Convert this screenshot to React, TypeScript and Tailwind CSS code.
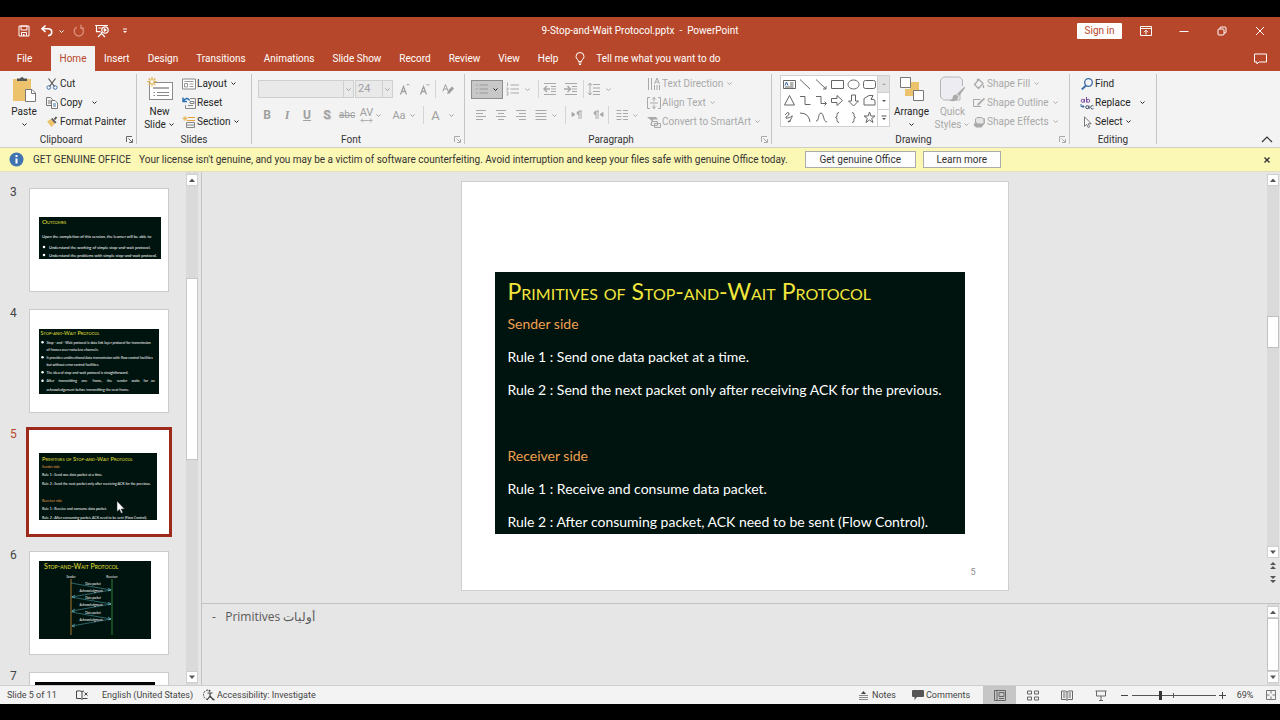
import type { ReactNode } from "react";
import clsx from "clsx";

type IconProps = {
  children: ReactNode;
  box?: string;
  className?: string;
};

function Icon({ children, box = "0 0 14 14", className = "size-[14px]" }: IconProps) {
  return (
    <svg
      viewBox={box}
      className={clsx("shrink-0", className)}
      fill="none"
      stroke="currentColor"
      strokeWidth="1"
      aria-hidden="true"
    >
      {children}
    </svg>
  );
}

function Chevron({ className = "" }: { className?: string }) {
  return (
    <Icon box="0 0 7 7" className={clsx("size-[7px]", className)}>
      <path d="M1.5 2.5 3.5 4.5 5.5 2.5" />
    </Icon>
  );
}

/* ---------- title bar and tabs ---------- */

const tabs = ["Insert", "Design", "Transitions", "Animations", "Slide Show", "Record", "Review", "View", "Help"];

function TitleBar() {
  return (
    <header className="grid h-[29px] grid-cols-[1fr_auto_1fr] items-center bg-[#b7472a] pb-px text-white">
      <div className="flex items-center pl-4">
        <button aria-label="Save" className="flex w-[15px] justify-center">
          <Icon box="0 0 12 12" className="size-3">
            <path d="M1 1h10v10H1z" />
            <path d="M3 1h6v4H3zM3.5 11V7.5h5V11" />
            <path d="M5 9h1.5v2H5z" fill="currentColor" stroke="none" />
          </Icon>
        </button>
        <button aria-label="Undo" className="ml-2 flex w-4 justify-center">
          <Icon className="size-[14px]">
            <path d="M5.5 1.5 2 4.8 5.5 8M2.3 4.8H8c5 0 5 6.5 0 7" strokeWidth="1.6" />
          </Icon>
        </button>
        <Chevron className="ml-[3px]" />
        <button aria-label="Redo" className="ml-[5px] flex w-[18px] justify-center text-[#d98a75]">
          <Icon className="size-[14px]">
            <path d="M9.2 3.4A4.6 4.6 0 1 1 4.8 3.2M9 .8v3.4h3.2" strokeWidth="1.5" />
          </Icon>
        </button>
        <button aria-label="Start from beginning" className="ml-[6px] flex w-4 justify-center">
          <Icon box="0 0 16 14" className="h-[14px] w-4">
            <path d="M1 1.5h13M2.5 1.5v6.2h4M4.5 4h3M4 13l3.5-3.5V8M7.5 9.5 11 13" strokeWidth="1.2" />
            <circle cx="11" cy="6" r="3.2" strokeWidth="1.2" />
            <path d="m10.2 4.5 2.2 1.5-2.2 1.5z" fill="currentColor" />
          </Icon>
        </button>
        <button aria-label="Customize quick access toolbar" className="ml-[10px] flex w-[10px] justify-center">
          <Icon box="0 0 6 6" className="size-[6px]">
            <path d="M1 1h4" />
            <path d="M1 3h4L3 5z" fill="currentColor" stroke="none" />
          </Icon>
        </button>
      </div>
      <h1 className="whitespace-pre">9-Stop-and-Wait Protocol.pptx  -  PowerPoint</h1>
      <div className="flex items-center justify-end pr-px">
        <button className="mr-[5px] h-4 w-[45px] rounded-[1px] bg-white text-[#b7472a]">Sign in</button>
        <button aria-label="Ribbon display options" className="flex w-[38px] justify-center">
          <Icon box="0 0 12 10" className="h-[10px] w-3">
            <path d="M.5 .5h11v9H.5zM.5 2.5h11M6 8.5v-4M4 6.2l2-2 2 2" />
          </Icon>
        </button>
        <button aria-label="Minimize" className="flex w-[38px] justify-center">
          <Icon box="0 0 10 10" className="size-[10px]">
            <path d="M.5 5.5h9" />
          </Icon>
        </button>
        <button aria-label="Restore" className="flex w-[38px] justify-center">
          <Icon box="0 0 10 10" className="size-[10px]">
            <rect x="1" y="3" width="6" height="6" rx="1" />
            <path d="M3 3V2q0-1 1-1h4q1 0 1 1v4q0 1-1 1H7" />
          </Icon>
        </button>
        <button aria-label="Close" className="flex w-[38px] justify-center">
          <Icon box="0 0 10 10" className="size-[10px]">
            <path d="m1 1 8 8M9 1 1 9" />
          </Icon>
        </button>
      </div>
    </header>
  );
}

function TabRow() {
  return (
    <nav className="flex h-[25px] items-stretch bg-[#b7472a] text-white">
      <button className="w-[49px]">File</button>
      <button className="ml-[2px] w-[44px] bg-[#f3f3f3] text-[#b7472a]">Home</button>
      <div className="flex items-stretch">
        {tabs.map((tab) => (
          <button key={tab} className="px-[9px] whitespace-nowrap">
            {tab}
          </button>
        ))}
      </div>
      <label htmlFor="tell-me" aria-label="Tell me" className="flex items-center pb-px pl-2">
        <Icon box="0 0 10 13" className="h-[13px] w-[10px]">
          <path d="M3.5 9.5C3.5 7.5 1 7 1 4.5a4 4 0 0 1 8 0C9 7 6.5 7.5 6.5 9.5zM3.5 11h3M4 12.5h2" />
        </Icon>
      </label>
      <input
        id="tell-me"
        placeholder="Tell me what you want to do"
        className="ml-[11px] w-40 bg-transparent outline-none placeholder:text-white"
      />
      <button aria-label="Comments" className="mr-[13px] ml-auto flex items-center">
        <Icon box="0 0 13 12" className="h-3 w-[13px]">
          <path d="M.5 1h12v8H5l-2 2V9H.5z" />
        </Icon>
      </button>
    </nav>
  );
}

/* ---------- ribbon ---------- */

type GroupProps = { label: string; width: string; launcher?: "on" | "off"; children: ReactNode };

function Group({ label, width, launcher, children }: GroupProps) {
  return (
    <section className={clsx("flex h-[76px] shrink-0", width)}>
      <div className="flex min-w-0 flex-1 flex-col">
        <div className="flex h-[61px] pt-[2px]">{children}</div>
        <div className="flex flex-1 items-center">
          <h2 className="flex-1 text-center text-[#333]">{label}</h2>
          {launcher && (
            <button
              aria-label={`${label} settings`}
              className={clsx("w-[14px] pl-1", launcher === "on" ? "text-[#666]" : "text-[#aaa]")}
            >
              <Icon box="0 0 7 7" className="size-[7px]">
                <path d="M.5 6V.5H6M2.5 2.5 6 6M6.5 3v3.5H3" />
              </Icon>
            </button>
          )}
        </div>
      </div>
      <div className="my-[3px] w-px bg-[#c6c6c6]" />
    </section>
  );
}

type CommandProps = { icon: ReactNode; label: string; menu?: "near" | "far"; disabled?: boolean };

function Command({ icon, label, menu, disabled }: CommandProps) {
  return (
    <button
      disabled={disabled}
      className={clsx("flex h-[19px] items-center whitespace-nowrap", disabled ? "text-[#a9a9a9]" : "text-[#262626]")}
    >
      <span className="mr-px flex w-[14px] justify-center">{icon}</span>
      {label}
      {menu && <Chevron className={menu === "far" ? "ml-2" : "ml-[3px]"} />}
    </button>
  );
}

function CommandColumn({ children, className }: { children: ReactNode; className?: string }) {
  return <div className={clsx("flex flex-col items-start pt-px", className)}>{children}</div>;
}

function BigCommand({ icon, lines, disabled }: { icon: ReactNode; lines: string[]; disabled?: boolean }) {
  return (
    <button
      disabled={disabled}
      className={clsx("flex flex-col items-center leading-[13px]", disabled ? "text-[#a9a9a9]" : "text-[#262626]")}
    >
      <span className="flex h-8 items-center">{icon}</span>
      <span>{lines[0]}</span>
      <span className="flex h-[13px] items-center gap-[2px]">
        {lines[1]}
        <Chevron />
      </span>
    </button>
  );
}

function Separator() {
  return <span className="h-[18px] w-px bg-[#d4d4d4]" />;
}

function ClipboardGroup() {
  return (
    <Group label="Clipboard" width="w-[137px]" launcher="on">
      <div className="flex w-[45px] justify-center pl-[3px]">
        <BigCommand
          lines={["Paste"]}
          icon={
            <Icon box="0 0 24 26" className="h-[26px] w-6">
              <path d="M1 3h18v22H1z" fill="#ecc26c" stroke="none" />
              <path d="M5 5V2.5h3Q10-.5 12 2.5h3V5z" fill="#555" stroke="none" />
              <path d="M13.5 13.5h6.5l3.5 3.5v8.5h-10z" fill="#fff" stroke="#777" />
              <path d="M19.5 13.5V17.5h4" stroke="#777" />
            </Icon>
          }
        />
      </div>
      <CommandColumn>
        <Command
          label="Cut"
          icon={
            <Icon box="0 0 12 12" className="size-3">
              <path d="M2.5 .5 8.5 8.5M9.5 .5 3.5 8.5" stroke="#555" strokeWidth="1.2" />
              <circle cx="2.8" cy="9.5" r="1.8" stroke="#4672a8" />
              <circle cx="9.2" cy="9.5" r="1.8" stroke="#4672a8" />
            </Icon>
          }
        />
        <Command
          label="Copy"
          menu="far"
          icon={
            <Icon box="0 0 12 12" className="size-3">
              <path d="M.5 .5h4l2 2v6h-6zM2 4h3M2 6h3" stroke="#777" />
              <path d="M5.5 3.5h3.5l2.5 2.5v5.5h-6z" fill="#fff" stroke="#777" />
              <path d="M7 7h3M7 9h3" stroke="#4672a8" />
            </Icon>
          }
        />
        <Command
          label="Format Painter"
          icon={
            <Icon box="0 0 12 12" className="size-3">
              <path d="M1 5.5 5 3l4 4.5L5.5 11z" fill="#ecc26c" stroke="none" />
              <path d="m5 3 1.5-1 4 4.5L9 7.5z" fill="#555" stroke="none" />
              <path d="m8.5 3.5 2-2.5" stroke="#555" strokeWidth="2" />
            </Icon>
          }
        />
      </CommandColumn>
    </Group>
  );
}

function SlidesGroup() {
  return (
    <Group label="Slides" width="w-[115px]">
      <div className="flex w-[45px] justify-center">
        <BigCommand
          lines={["New", "Slide"]}
          icon={
            <Icon box="0 0 26 24" className="h-6 w-[26px]">
              <rect x="2.5" y="5.5" width="23" height="17" fill="#fff" stroke="#8a8a8a" />
              <path d="M6 10h16v2H6z" fill="#aaa" stroke="none" />
              <path d="M10 15.5h12M10 18.5h12M6.5 15.5h1.5M6.5 18.5h1.5" stroke="#8a8a8a" />
              <path d="M5 0v9.5M.2 4.7h9.6M1.7 1.5l6.6 6.6M8.3 1.5 1.7 8.1" stroke="#e3b04b" strokeWidth="1.3" />
              <circle cx="5" cy="4.7" r="1.7" fill="#fff" stroke="none" />
            </Icon>
          }
        />
      </div>
      <CommandColumn>
        <Command
          label="Layout"
          menu="near"
          icon={
            <Icon box="0 0 14 12" className="h-3 w-[14px]">
              <path d="M.5 1h13v10H.5z" fill="#fff" stroke="#888" />
              <path d="M2.5 3.5h9M2.5 5.5h3v3.5h-3zM7.5 6h4M7.5 8.5h4" stroke="#999" />
            </Icon>
          }
        />
        <Command
          label="Reset"
          icon={
            <Icon box="0 0 14 12" className="h-3 w-[14px]">
              <path d="M8 1.5h5.5v10h-10V8M6 8.5h5M8 4.5h4v2H8z" stroke="#888" />
              <path d="M1 .5v4h4M1.2 4.3C3 .8 6.5.5 7.5 3.5" stroke="#2b6cb0" strokeWidth="1.4" />
            </Icon>
          }
        />
        <Command
          label="Section"
          menu="near"
          icon={
            <Icon box="0 0 14 12" className="h-3 w-[14px]">
              <path d="M3 0v5M.5 2.5h5M1.2.7l3.6 3.6M4.8.7 1.2 4.3" stroke="#e3b04b" strokeWidth=".8" />
              <path d="M6 1.5h7M5 4.5h8" stroke="#e3a13c" />
              <path d="M4.5 6.5h8v5h-8zM4.5 9h8" stroke="#888" />
            </Icon>
          }
        />
      </CommandColumn>
    </Group>
  );
}

function FontGroup() {
  return (
    <Group label="Font" width="w-[213px]" launcher="off">
      <div className="flex flex-col gap-2 pt-[7px] pl-[6px] text-[#a0a0a0]">
        <div className="flex h-[18px] items-center">
          <div className="flex h-[18px] w-[96px] items-center border border-[#cfcfcf] bg-[#e9e9e9]">
            <select aria-label="Font name" disabled className="h-full min-w-0 flex-1 appearance-none border-r border-[#cfcfcf]" />
            <Chevron className="mx-px" />
          </div>
          <div className="ml-px flex h-[18px] w-[38px] items-center border border-[#cfcfcf] bg-[#e9e9e9]">
            <select
              aria-label="Font size"
              disabled
              className="h-full min-w-0 flex-1 appearance-none border-r border-[#cfcfcf] pl-[2px] text-[11px]"
            >
              <option>24</option>
            </select>
            <Chevron className="mx-px" />
          </div>
          <button disabled aria-label="Increase font size" className="ml-[2px] flex w-5 justify-center">
            <Icon box="0 0 12 12" className="size-3">
              <path d="m1.5 11.5 3-8 3 8M2.5 8.5h4" strokeWidth="1.3" />
              <path d="m7.5 2.5 1.5-1.5 1.5 1.5" />
            </Icon>
          </button>
          <button disabled aria-label="Decrease font size" className="flex w-5 justify-center">
            <Icon box="0 0 12 12" className="size-3">
              <path d="m1.5 11.5 3-8 3 8M2.5 8.5h4" strokeWidth="1.3" />
              <path d="m7.5 1 1.5 1.5 1.5-1.5" />
            </Icon>
          </button>
          <Separator />
          <button disabled aria-label="Clear all formatting" className="flex w-6 justify-center">
            <Icon box="0 0 12 12" className="size-3">
              <path d="m.8 8.5 2.7-7 2.7 7M1.8 6h3.4" />
              <path d="m6.5 7 3.5-3.5 2 2L7.5 10.5 5 11z" fill="currentColor" stroke="none" />
            </Icon>
          </button>
        </div>
        <div className="-ml-px flex h-[18px] items-center text-xs leading-none">
          <button disabled className="w-5 font-bold">B</button>
          <button disabled className="w-5 font-serif font-bold italic">I</button>
          <button disabled className="w-5 font-bold underline">U</button>
          <button disabled className="w-5 font-bold [text-shadow:1px_1px_1px_#ccc]">S</button>
          <button disabled className="w-5 text-[10px] line-through">abc</button>
          <button disabled aria-label="Character spacing" className="flex w-7 items-center justify-center gap-[2px]">
            <span className="flex flex-col items-center text-[11px]">
              AV
              <Icon box="0 0 13 5" className="h-[5px] w-[13px]">
                <path d="M1 2.5h11M3 .5l-2 2 2 2M10 .5l2 2-2 2" strokeWidth=".8" />
              </Icon>
            </span>
            <Chevron />
          </button>
          <button disabled className="flex w-[38px] items-center justify-center gap-[3px] text-[11px]">
            Aa
            <Chevron />
          </button>
          <Separator />
          <button disabled aria-label="Font color" className="flex w-[38px] items-center justify-center gap-2 text-[13px]">
            A
            <Chevron />
          </button>
        </div>
      </div>
    </Group>
  );
}

function Lines({ d, label }: { d: string; label: string }) {
  return (
    <button disabled aria-label={label} className="flex w-5 justify-center">
      <Icon box="0 0 12 10" className="h-[10px] w-3">
        <path d={d} />
      </Icon>
    </button>
  );
}

function ParagraphGroup() {
  return (
    <Group label="Paragraph" width="w-[307px]" launcher="off">
      <div className="flex w-[182px] flex-col gap-2 pt-[7px] pl-[6px] text-[#a9a9a9]">
        <div className="flex h-[18px] items-center">
          <button
            aria-label="Bullets"
            className="flex h-[19px] w-8 items-center justify-center gap-[3px] border border-[#8e8e8e] bg-[#c8c8c8]"
          >
            <Icon className="size-[14px]">
              <path d="M1 3h1.5M1 7h1.5M1 11h1.5M4.5 3H13M4.5 7H13M4.5 11H13" stroke="#999" />
            </Icon>
            <Chevron className="text-[#222]" />
          </button>
          <button disabled aria-label="Numbering" className="flex w-7 items-center justify-end gap-1">
            <Icon className="size-[14px]">
              <path d="M4.5 3H13M4.5 7H13M4.5 11H13M1.5.5V4M.5 6h1.5v2H.5M.5 10h1.5v3H.5" />
            </Icon>
            <Chevron />
          </button>
          <span className="w-[7px]" />
          <Separator />
          <button disabled aria-label="Decrease list level" className="ml-[2px] flex w-[18px] justify-center">
            <Icon className="size-[14px]">
              <path d="M1 1.5h12M8 4.5h5M8 7h5M8 9.5h5M1 12.5h12" />
              <path d="M1 7h6M4 4 1 7l3 3" strokeWidth="1.5" />
            </Icon>
          </button>
          <button disabled aria-label="Increase list level" className="flex w-[24px] justify-center">
            <Icon className="size-[14px]">
              <path d="M1 1.5h12M8 4.5h5M8 7h5M8 9.5h5M1 12.5h12" />
              <path d="M0 7h6M3.5 4l3 3-3 3" strokeWidth="1.5" />
            </Icon>
          </button>
          <Separator />
          <button disabled aria-label="Line spacing" className="flex w-[28px] items-center justify-end gap-1">
            <Icon className="size-[14px]">
              <path d="M6 2.5h7M6 6h7M6 9.5h7M6 12.5h7M3 1v12M1 3.5 3 1l2 2.5M1 10.5 3 13l2-2.5" />
            </Icon>
            <Chevron />
          </button>
        </div>
        <div className="flex h-[18px] items-center">
          <Lines label="Align left" d="M1 .5h10M1 3.5h7M1 6.5h10M1 9.5h7" />
          <Lines label="Center" d="M1 .5h10M3 3.5h6M1 6.5h10M3 9.5h6" />
          <Lines label="Align right" d="M1 .5h10M4 3.5h7M1 6.5h10M4 9.5h7" />
          <Lines label="Justify" d="M.5 .5h11M.5 3.5h11M.5 6.5h11M.5 9.5h11" />
          <Chevron />
          <span className="w-[7px]" />
          <Separator />
          <Icon box="0 0 12 10" className="mx-[5px] h-[10px] w-3">
            <path d="M1 2.5v4l3-2zM8 1v8M10 1v8M11 1H8" fill="currentColor" />
            <path d="M8 1Q5.5 1 5.5 3T8 5z" fill="currentColor" stroke="none" />
          </Icon>
          <Icon box="0 0 12 10" className="mx-1 h-[10px] w-3">
            <path d="M11 2.5v4l-3-2zM4 1v8M6 1v8M7 1H4" fill="currentColor" />
            <path d="M4 1Q1.5 1 1.5 3T4 5z" fill="currentColor" stroke="none" />
          </Icon>
          <Separator />
          <button disabled aria-label="Columns" className="flex w-[30px] items-center justify-end gap-1">
            <Icon box="0 0 12 10" className="h-[10px] w-3">
              <path d="M.5 .5h5M.5 3.5h5M.5 6.5h5M.5 9.5h5M7 .5h5M7 3.5h5M7 6.5h5M7 9.5h5" />
            </Icon>
            <Chevron />
          </button>
        </div>
      </div>
      <CommandColumn>
        <Command
          disabled
          label="Text Direction"
          menu="near"
          icon={
            <Icon box="0 0 14 12" className="h-3 w-[14px]">
              <path d="M1.5 0v12M4.5 0v12M10 7v5M12.5 7v5M7.5 7v5M7.5 6l2.5-6 2.5 6M8.5 4h3" />
            </Icon>
          }
        />
        <Command
          disabled
          label="Align Text"
          menu="near"
          icon={
            <Icon box="0 0 14 12" className="h-3 w-[14px]">
              <path d="M3 .5H.5v11H3M11 .5h2.5v11H11M3 6h8M7 0v4.5M5 2.5 7 .5l2 2M7 7.5V12M5 9.5l2 2 2-2" />
            </Icon>
          }
        />
        <Command
          disabled
          label="Convert to SmartArt"
          menu="near"
          icon={
            <Icon box="0 0 14 12" className="h-3 w-[14px]">
              <path d="M0 1h9l2 2.5H6V8L3 9l2-4z" fill="currentColor" stroke="none" />
              <path d="M4.5 5.5h6v4h-6zM7.5 7.5h6v4h-6z" fill="#eee" />
            </Icon>
          }
        />
      </CommandColumn>
    </Group>
  );
}

const shapes = [
  { name: "Text box", d: "M1.5 3.5h12v8h-12zM8 6h3.5M8 8h3.5M3 10h8.5" },
  { name: "Line", d: "M2 2.5 12 12" },
  { name: "Arrow", d: "M2 2.5 12 12M12 9v3H9" },
  { name: "Rectangle", d: "M1.5 3.5h12v8h-12z" },
  { name: "Oval", d: "M7.5 3a5.5 4.5 0 1 0 .1 0z" },
  { name: "Rounded rectangle", d: "M3.5 3.5h8q2 0 2 2v4q0 2-2 2h-8q-2 0-2-2v-4q0-2 2-2z" },
  { name: "Triangle", d: "M7.5 2.5 12.5 12h-10z" },
  { name: "Elbow connector", d: "M2 3.5h5v8h5.5" },
  { name: "Elbow arrow", d: "M2 3.5h5v7h5M10.5 8.5l2 2-2 2" },
  { name: "Right arrow", d: "M1.5 5.5h5.5v-3l5.5 5-5.5 5v-3H1.5z" },
  { name: "Down arrow", d: "M5.5 2v6h-3l5 5 5-5h-3V2z" },
  { name: "Freeform", d: "M2 5.5 7 2.5h4L9 6.5q4-1 4 1.5v4H2z" },
  { name: "Scribble", d: "M3 5q3-4 4-2t-3 4q-1 2 2 1t4-2-1 3-3 3 3-1" },
  { name: "Arc", d: "M2 3q9 0 10 9" },
  { name: "Curve", d: "M2 11C5 12 4 3 7 3s2 9 6 9" },
  { name: "Left brace", d: "M9 2.5q-2 0-2 2v1q0 2-1.5 2Q7 7.5 7 9.5v1q0 2 2 2" },
  { name: "Right brace", d: "M6 2.5q2 0 2 2v1q0 2 1.5 2Q8 7.5 8 9.5v1q0 2-2 2" },
  { name: "Star", d: "m7.5 2 1.4 4h4.1L9.7 8.5l1.3 4-3.5-2.5L4 12.5l1.3-4L2 6h4.1z" },
];

function DrawingGroup() {
  return (
    <Group label="Drawing" width="w-[298px]" launcher="off">
      <div className="mt-[2px] ml-2 flex h-[52px] w-[110px] border border-[#d0d0d0] bg-white">
        <div className="grid flex-1 grid-cols-6 grid-rows-3">
          {shapes.map((shape) => (
            <button key={shape.name} aria-label={shape.name} className="flex items-center justify-center text-[#666]">
              <Icon box="0 0 15 15" className="size-[15px]">
                <path d={shape.d} />
                {shape.name === "Text box" && <path d="m3 8.5 1.5-3.5L6 8.5" stroke="#2f62a8" />}
              </Icon>
            </button>
          ))}
        </div>
        <div className="flex w-3 flex-col border-l border-[#d0d0d0] text-[#555]">
          <button aria-label="Scroll up" className="flex flex-1 items-center justify-center bg-[#e1e1e1] text-[#aaa]">
            <Icon box="0 0 6 6" className="size-[6px]">
              <path d="M1 4h4L3 2z" fill="currentColor" stroke="none" />
            </Icon>
          </button>
          <button aria-label="Scroll down" className="flex flex-1 items-center justify-center border-y border-[#d0d0d0]">
            <Icon box="0 0 6 6" className="size-[6px]">
              <path d="M1 2h4L3 4z" fill="currentColor" stroke="none" />
            </Icon>
          </button>
          <button aria-label="More shapes" className="flex flex-1 items-center justify-center">
            <Icon box="0 0 6 6" className="size-[6px]">
              <path d="M.5 1h5" />
              <path d="M1 3h4L3 5z" fill="currentColor" stroke="none" />
            </Icon>
          </button>
        </div>
      </div>
      <div className="flex w-[43px] justify-center">
        <BigCommand
          lines={["Arrange"]}
          icon={
            <Icon box="0 0 24 24" className="size-6">
              <path d="M10 5h9v9h-9zM5 12h8v7H5z" fill="#ecc26c" stroke="none" />
              <path d="M.5.5h10v10H.5zM13.5 13.5h10v10h-10z" fill="#fff" stroke="#777" />
            </Icon>
          }
        />
      </div>
      <div className="flex w-[39px] justify-center">
        <BigCommand
          disabled
          lines={["Quick", "Styles"]}
          icon={
            <Icon box="0 0 26 26" className="size-[26px]">
              <path d="M20 16.5V24H3.5l-3-3v-17l3-3h16l3 3v6" fill="#ececf2" stroke="#b5b5b5" />
              <path d="M24.5 10.5 17 18l2 2 6-8zM16.5 18.5q-4 0-4 4-1 2-4 2 8 2.5 10-3.5z" fill="#aaa" stroke="none" />
            </Icon>
          }
        />
      </div>
      <CommandColumn>
        <Command
          disabled
          label="Shape Fill"
          menu="near"
          icon={
            <Icon box="0 0 12 12" className="size-3">
              <path d="m6 1.5 4 4-4.5 5-4-4zM4.5 4V1.5h2M10.5 7v3" strokeWidth="1.3" />
            </Icon>
          }
        />
        <Command
          disabled
          label="Shape Outline"
          menu="near"
          icon={
            <Icon box="0 0 12 12" className="size-3">
              <path d="M7.5 2.5h-7v7H8" />
              <path d="m4 9 .8-2.5L11 .8 12 2 6 8z" fill="currentColor" stroke="none" />
            </Icon>
          }
        />
        <Command
          disabled
          label="Shape Effects"
          menu="near"
          icon={
            <Icon box="0 0 12 12" className="size-3">
              <path d="M3.5 4 11.5 2 12 7l-3.5 4.5H3L.5 9z" fill="currentColor" stroke="none" />
              <path d="M4 1.5h5l2 2v3l-1.5 1.5h-5L2.5 6V3z" fill="#e4e4e4" />
            </Icon>
          }
        />
      </CommandColumn>
    </Group>
  );
}

function EditingGroup() {
  return (
    <Group label="Editing" width="w-[87px]">
      <CommandColumn className="pl-[10px]">
        <Command
          label="Find"
          icon={
            <Icon box="0 0 12 12" className="size-3">
              <circle cx="7.5" cy="4.5" r="3.8" stroke="#3a6aa5" strokeWidth="1.3" />
              <path d="M5 7.5.8 11.5" stroke="#3a6aa5" strokeWidth="1.8" />
            </Icon>
          }
        />
        <Command
          label="Replace"
          menu="far"
          icon={
            <Icon className="size-[14px]">
              <circle cx="2.7" cy="4.8" r="1.5" stroke="#7b4a9e" />
              <path d="M4.5 3v3.5M6.5 1v5.5" stroke="#7b4a9e" />
              <circle cx="8.200" cy="4.800" r="1.500" stroke="#7b4a9e" />
              <circle cx="7.200" cy="11.200" r="1.500" stroke="#44546a" />
              <path d="M9 9.500V13M13.500 10a1.700 1.700 0 1 0 0 2.500" stroke="#44546a" />
              <path d="M1 8v2.500h3M2.500 9l1.500 1.500L2.500 12" stroke="#3a6aa5" />
            </Icon>
          }
        />
        <Command
          label="Select"
          menu="near"
          icon={
            <Icon box="0 0 12 12" className="size-3">
              <path d="M3.5.8v9.5l2.2-2 1.5 3.2 1.5-.7-1.5-3.1h3z" fill="#fff" stroke="#777" />
            </Icon>
          }
        />
      </CommandColumn>
    </Group>
  );
}

function Ribbon() {
  return (
    <div className="flex border-b border-[#cfcfc4] bg-[#f3f3f3]">
      <ClipboardGroup />
      <SlidesGroup />
      <FontGroup />
      <ParagraphGroup />
      <DrawingGroup />
      <EditingGroup />
      <button aria-label="Collapse the ribbon" className="mr-[7px] mb-1 ml-auto self-end text-[#333]">
        <Icon box="0 0 12 7" className="h-[7px] w-3">
          <path d="m1 6 5-5 5 5" strokeWidth="1.2" />
        </Icon>
      </button>
    </div>
  );
}

function LicenseBar() {
  return (
    <div className="flex h-6 items-center border-b border-[#e0dfc0] bg-[#fbf7b4] text-[#333]">
      <Icon box="0 0 15 15" className="ml-[9px] size-[15px]">
        <circle cx="7.5" cy="7.5" r="7" fill="#3f74b0" stroke="none" />
        <path d="M7.5 6.5v5M7.5 3v2" stroke="#fff" strokeWidth="2" />
      </Icon>
      <strong className="ml-[9px] w-[106px] font-normal whitespace-nowrap">GET GENUINE OFFICE</strong>
      <p className="whitespace-nowrap">
        Your license isn't genuine, and you may be a victim of software counterfeiting. Avoid interruption and keep your
        files safe with genuine Office today.
      </p>
      <button className="ml-[17px] h-[17px] w-[111px] border border-[#ababab] bg-[#fdfdfd]">Get genuine Office</button>
      <button className="ml-[7px] h-[17px] w-[78px] border border-[#ababab] bg-[#fdfdfd]">Learn more</button>
      <button aria-label="Close message" className="mr-[10px] ml-auto">
        <Icon box="0 0 6 6" className="size-[6px]">
          <path d="m.5.5 5 5M5.5.5l-5 5" strokeWidth="1.4" />
        </Icon>
      </button>
    </div>
  );
}

/* ---------- slides ---------- */

const rules = [
  { text: "Sender side", heading: true },
  { text: "Rule 1 : Send one data packet at a time." },
  { text: "Rule 2 : Send the next packet only after receiving ACK for the previous." },
  { text: "\u00a0" },
  { text: "Receiver side", heading: true },
  { text: "Rule 1 : Receive and consume data packet." },
  { text: "Rule 2 : After consuming packet, ACK need to be sent (Flow Control)." },
];

// Slide previews are drawn at a quarter of the slide's own units.
function OutcomesSlide() {
  return (
    <svg viewBox="0 0 488 168" className="mt-[28px] ml-[9px] h-[42px] w-[122px] bg-[#00140f]" fill="#fff" fontSize="16">
      <text x="12" y="29" fontSize="25" fill="#e6e03a" className="[font-variant:small-caps]">Outcomes</text>
      <text x="12" y="82">Upon the completion of this session, the learner will be able to</text>
      <circle cx="20" cy="120" r="5" />
      <text x="40" y="126">Understand the working of simple stop-and-wait protocol.</text>
      <circle cx="20" cy="152" r="5" />
      <text x="40" y="158">Understand the problems with simple stop-and-wait protocol.</text>
    </svg>
  );
}

const protocolLines = [
  { y: 58, bullet: true, text: "Stop - and - Wait protocol is data link layer protocol for transmission" },
  { y: 88, text: "of frames over noiseless channels." },
  { y: 118, bullet: true, text: "It provides unidirectional data transmission with flow control facilities" },
  { y: 148, text: "but without error control facilities." },
  { y: 178, bullet: true, text: "The idea of stop-and-wait protocol is straightforward." },
  { y: 248, text: "acknowledgement before transmitting the next frame." },
];

const spreadWords = [
  { x: 30, word: "After" },
  { x: 78, word: "transmitting" },
  { x: 170, word: "one" },
  { x: 214, word: "frame," },
  { x: 272, word: "the" },
  { x: 312, word: "sender" },
  { x: 370, word: "waits" },
  { x: 418, word: "for" },
  { x: 448, word: "an" },
];

function ProtocolSlide() {
  return (
    <svg viewBox="0 0 480 260" className="mt-[19px] ml-[9px] h-[65px] w-[120px] bg-[#00140f]" fill="#fff" fontSize="14">
      <text x="6" y="24" fontSize="22" fill="#e6e03a" className="[font-variant:small-caps]">Stop-and-Wait Protocol</text>
      {protocolLines.map((line) => (
        <g key={line.y}>
          {line.bullet && <circle cx="14" cy={line.y - 5} r="5" />}
          <text x="30" y={line.y}>{line.text}</text>
        </g>
      ))}
      <circle cx="14" cy="207" r="5" />
      <text y="212">
        {spreadWords.map(({ x, word }) => (
          <tspan key={word} x={x}>{word}</tspan>
        ))}
      </text>
    </svg>
  );
}

function PrimitivesSlide() {
  return (
    <svg viewBox="0 0 472 268" className="mt-[22px] ml-[9px] h-[67px] w-[118px] bg-[#00140f]" fill="#fff" fontSize="14">
      <text x="12" y="30" fontSize="23" fill="#e6e03a" className="[font-variant:small-caps]">
        Primitives of Stop-and-Wait Protocol
      </text>
      {rules.map((rule, i) => (
        <text key={rule.text} x="12" y={58 + i * 34} fill={rule.heading ? "#e8a04c" : undefined}>
          {rule.text}
        </text>
      ))}
    </svg>
  );
}

const exchanges = [22, 36, 51];

function SequenceSlide() {
  return (
    <svg viewBox="0 0 112 78" className="mt-[9px] ml-[9px] h-[78px] w-[112px] bg-[#00140f]" fontSize="3" textAnchor="middle">
      <text x="5" y="8" fontSize="7" textAnchor="start" fill="#e6e03a" className="[font-variant:small-caps]">
        Stop-and-Wait Protocol
      </text>
      <path d="M32 18v56" stroke="#a9762f" strokeWidth="1" />
      <path d="M73 18v56" stroke="#2f7d3a" strokeWidth="1" />
      <g fill="#fff">
        <text x="32" y="17">Sender</text>
        <text x="73" y="17">Receiver</text>
      </g>
      {exchanges.map((y) => (
        <g key={y} stroke="#4b9aa5" strokeWidth=".6" fill="none">
          <path d={`M32 ${y} 72 ${y + 7} 33 ${y + 14}`} />
          <path d={`M69 ${y + 5} 72 ${y + 7} 69 ${y + 8}M36 ${y + 12} 33 ${y + 14} 36 ${y + 15}`} stroke="#7fd0e0" />
          <text x="54" y={y + 2} fill="#fff" stroke="none">Data packet</text>
          <text x="52" y={y + 9} fill="#fff" stroke="none">Acknowledgment</text>
        </g>
      ))}
    </svg>
  );
}

const thumbnails = [
  { number: 3, body: <OutcomesSlide /> },
  { number: 4, body: <ProtocolSlide /> },
  { number: 5, body: <PrimitivesSlide /> },
  { number: 6, body: <SequenceSlide /> },
  { number: 7, body: <div className="mt-[9px] ml-[5px] h-20 w-[120px] bg-[#050505]" /> },
];

function ScrollButton({ label, up }: { label: string; up?: boolean }) {
  return (
    <button
      aria-label={label}
      className="flex h-3 w-full shrink-0 items-center justify-center border border-[#cfcfcf] bg-white text-[#555]"
    >
      <Icon box="0 0 8 8" className="size-2">
        <path d={up ? "M1 6h6L4 2.5z" : "M1 2.5h6L4 6z"} fill="currentColor" stroke="none" />
      </Icon>
    </button>
  );
}

function SlidePanel() {
  return (
    <aside className="flex w-[202px] shrink-0 border-r border-[#c3c3c3] pr-[3px]">
      <ol className="flex min-w-0 flex-1 flex-col gap-[17px] overflow-hidden pt-4">
        {thumbnails.map(({ number, body }) => (
          <li key={number} className="flex h-[104px] shrink-0">
            <span
              className={clsx("-mt-1 w-[29px] shrink-0 pl-[10px] text-xs", number === 5 ? "text-[#b7472a]" : "text-[#444]")}
            >
              {number}
            </span>
            <div
              className={clsx(
                "relative w-[140px] border bg-white font-[Lato,sans-serif]",
                number === 5 ? "border-white outline-3 outline-[#9e2a1c]" : "border-[#cbcbcb]",
              )}
            >
              {body}
              {number === 5 && (
                <Icon box="0 0 9 14" className="absolute top-[69px] left-[86px] h-[14px] w-[9px]">
                  <path d="M1 1v10.5l2.5-2 1.7 3.8 1.6-.8L5.1 9H8.5z" fill="#fff" stroke="#222" strokeWidth=".5" />
                </Icon>
              )}
            </div>
          </li>
        ))}
      </ol>
      <div className="flex w-3 flex-col bg-[#dadada] py-[2px]">
        <ScrollButton label="Previous slides" up />
        <div className="h-[92px]" />
        <div className="h-[182px] border border-[#c6c6c6] bg-white" />
        <div className="flex-1" />
        <ScrollButton label="Next slides" />
      </div>
    </aside>
  );
}

function Stage() {
  return (
    <div className="flex min-h-0 flex-1 border-b border-[#c3c3c3]">
      <div className="flex flex-1 items-start justify-center overflow-hidden pt-[9px]">
        <article className="flex h-[410px] w-[548px] shrink-0 flex-col border border-[#cfcfcf] bg-white font-[Lato,sans-serif]">
          <div className="mt-[90px] ml-[33px] h-[262px] w-[470px] overflow-hidden bg-[#00140f] pt-[3px] pl-[13px] text-sm leading-[33px] whitespace-nowrap text-white">
            <h2 className="text-[23px] leading-8 text-[#f2e63c] [font-variant:small-caps]">
              Primitives of Stop-and-Wait Protocol
            </h2>
            {rules.map((rule) => (
              <p key={rule.text} className={clsx(rule.heading && "text-[#f0a050]")}>
                {rule.text}
              </p>
            ))}
          </div>
          <span className="mt-8 mr-[32px] self-end font-[Roboto] text-[9px] leading-3 text-[#8a8a8a]">5</span>
        </article>
      </div>
      <div className="mr-px flex w-3 flex-col items-center pt-[2px] text-[#555]">
        <ScrollButton label="Scroll up" up />
        <div className="flex w-full flex-1 flex-col bg-[#dadada] pt-[130px]">
          <div className="h-8 border border-[#c0c0c0] bg-white" />
        </div>
        <ScrollButton label="Scroll down" />
        <button aria-label="Previous slide" className="flex h-[14px] items-center">
          <Icon box="0 0 8 9" className="h-[9px] w-2">
            <path d="M1 4h6L4 1zM1 8h6L4 5z" fill="currentColor" stroke="none" />
          </Icon>
        </button>
        <button aria-label="Next slide" className="mb-[17px] flex h-[14px] items-center">
          <Icon box="0 0 8 9" className="h-[9px] w-2">
            <path d="M1 1h6L4 4zM1 5h6L4 8z" fill="currentColor" stroke="none" />
          </Icon>
        </button>
      </div>
    </div>
  );
}

function NotesPane() {
  return (
    <div className="flex h-[81px] shrink-0">
      <textarea
        aria-label="Notes"
        defaultValue={"-\u00a0\u00a0 Primitives أوليات"}
        className="flex-1 resize-none overflow-hidden bg-transparent pt-1 pl-[10px] font-['Open_Sans',sans-serif] text-xs leading-[18px] text-[#595959] outline-none"
      />
      <div className="mr-px flex w-3 flex-col bg-[#dadada] py-[2px]">
        <ScrollButton label="Scroll notes up" up />
        <div className="flex-1 border border-[#c0c0c0] bg-white" />
        <ScrollButton label="Scroll notes down" />
      </div>
    </div>
  );
}

function StatusBar() {
  return (
    <footer className="flex h-[19px] shrink-0 items-stretch border-t border-[#cfcfcf] bg-[#f3f3f3] text-[9px] whitespace-nowrap text-[#444]">
      <span className="flex w-[76px] items-center pl-[7px]">Slide 5 of 11</span>
      <button aria-label="Spelling" className="flex w-[26px] items-center">
        <Icon box="0 0 12 10" className="h-[10px] w-3">
          <path d="M6 1.5v8M6 1.5Q4 .5.5 1v7.5H5l1 1 1-1h4.5M6 1.5 8 1M8.5 2.5l3 3M11.5 2.5l-3 3" />
        </Icon>
      </button>
      <button className="w-[100px] text-left">English (United States)</button>
      <button className="flex items-center gap-[2px]">
        <Icon box="0 0 13 12" className="h-3 w-[13px]">
          <path d="M6 1A4.7 4.7 0 1 0 6.5 10.5" strokeDasharray="2 1" />
          <path d="M5.5 4h5M8 4v3l3.5 4M8 7l-3 4M7.5 7.5l5 3.5" strokeWidth="1.2" />
          <circle cx="7.5" cy="1.7" r="1" fill="currentColor" stroke="none" />
        </Icon>
        Accessibility: Investigate
      </button>
      <div className="ml-auto flex items-stretch">
        <button className="flex w-[53px] items-center gap-1">
          <Icon box="0 0 9 10" className="h-[10px] w-[9px]">
            <path d="M0 5.5h9M0 7.5h9M0 9.5h9" stroke="#888" />
            <path d="M2 4h5L4.5 1z" fill="#444" stroke="none" />
          </Icon>
          Notes
        </button>
        <button className="flex w-[71px] items-center gap-[2px]">
          <Icon box="0 0 12 10" className="h-[10px] w-3">
            <path d="M1 0h10q1 0 1 1v5q0 1-1 1H5L2.5 10V7H1Q0 7 0 6V1q0-1 1-1z" fill="#555" stroke="none" />
          </Icon>
          Comments
        </button>
        <button aria-label="Normal view" className="flex w-[33px] items-center justify-center bg-[#c6c6c6] text-[#666]">
          <Icon box="0 0 12 11" className="h-[11px] w-3">
            <path d="M.5.5h11v10H.5zM3 .5v10M5 2.5h5v4H5zM5 8.5h5" />
          </Icon>
        </button>
        <button aria-label="Slide sorter" className="flex w-[34px] items-center justify-center text-[#666]">
          <Icon box="0 0 12 11" className="h-[11px] w-3">
            <path d="M.5 1h4v3h-4zM7.5 1h4v3h-4zM.5 7h4v3h-4zM7.5 7h4v3h-4z" />
          </Icon>
        </button>
        <button aria-label="Reading view" className="flex w-[34px] items-center justify-center text-[#666]">
          <Icon box="0 0 12 11" className="h-[11px] w-3">
            <path d="M.5 1H4.5L6 2l1.5-1h4v8.5H7L6 10.5 5 9.5H.5zM6 2v8.5M2 3h2.5M2 5h2.5M2 7h2.5M7.5 3H10M7.5 5H10M7.5 7H10" />
          </Icon>
        </button>
        <button aria-label="Slide show" className="flex w-[33px] items-center justify-center text-[#666]">
          <Icon box="0 0 12 11" className="h-[11px] w-3">
            <path d="M.5 1h11M1.5 1v5h9V1M6 6v4M4 10.5h4" />
          </Icon>
        </button>
        <button aria-label="Zoom out" className="flex w-[15px] items-center justify-center">
          <Icon box="0 0 7 7" className="size-[7px]">
            <path d="M0 3.5h7" />
          </Icon>
        </button>
        <div className="relative flex w-[84px] items-center">
          <span className="absolute top-[7px] left-[41px] h-[5px] w-px bg-[#555]" />
          <input
            type="range"
            aria-label="Zoom level"
            defaultValue={33}
            className="m-0 h-3 w-full appearance-none bg-transparent [&::-webkit-slider-runnable-track]:h-px [&::-webkit-slider-runnable-track]:bg-[#555] [&::-webkit-slider-thumb]:-mt-1 [&::-webkit-slider-thumb]:h-[9px] [&::-webkit-slider-thumb]:w-[3px] [&::-webkit-slider-thumb]:appearance-none [&::-webkit-slider-thumb]:bg-[#333]"
          />
        </div>
        <button aria-label="Zoom in" className="flex w-[13px] items-center justify-center">
          <Icon box="0 0 7 7" className="size-[7px]">
            <path d="M0 3.5h7M3.5 0v7" />
          </Icon>
        </button>
        <button className="w-[32px]">69%</button>
        <button aria-label="Fit slide to window" className="flex w-[19px] items-center justify-center text-[#777]">
          <Icon box="0 0 10 10" className="size-[10px]">
            <path d="M.5.5h9v9h-9zM5 1v2.5M5 6.5V9M1 5h2.5M6.5 5H9" />
          </Icon>
        </button>
      </div>
    </footer>
  );
}

export default function App() {
  return (
    <div className="flex h-screen flex-col overflow-hidden bg-black pt-[17px] pb-4 font-[Roboto,sans-serif] text-[10px] leading-[14px]">
      <TitleBar />
      <TabRow />
      <Ribbon />
      <LicenseBar />
      <main className="flex min-h-0 flex-1 bg-[#e6e6e6]">
        <SlidePanel />
        <div className="flex min-w-0 flex-1 flex-col">
          <Stage />
          <NotesPane />
        </div>
      </main>
      <StatusBar />
    </div>
  );
}
